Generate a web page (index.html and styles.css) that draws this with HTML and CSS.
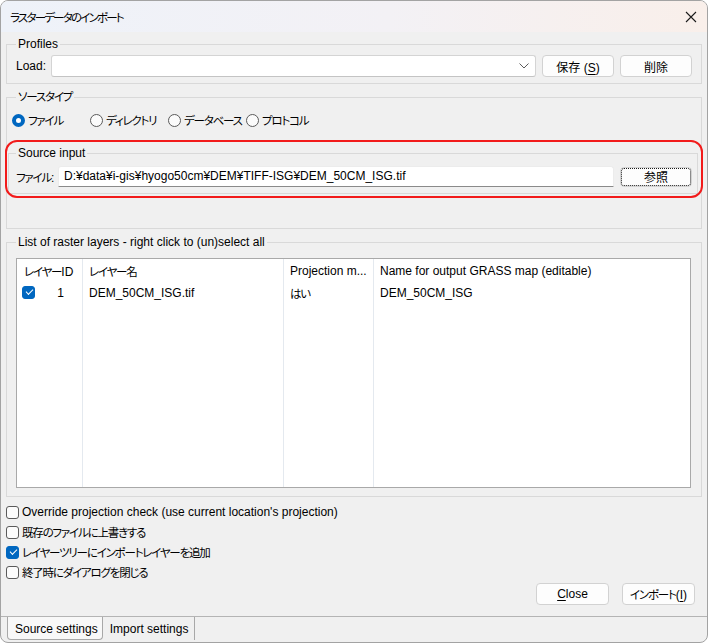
FILE: index.html
```html
<!doctype html>
<html lang="ja">
  <head>
    <meta charset="UTF-8" />
    <title>ラスターデータのインポート</title>
    <link rel="stylesheet" href="styles.css">
  </head>
  <body>
    <div class="window">
      <div class="titlebar">
        <span class="title">ラスターデータのインポート</span>
        <svg class="close-icon" width="12" height="12" viewBox="0 0 12 12">
          <path d="M1 1 L11 11 M11 1 L1 11" stroke="#1b1b1b" stroke-width="1.1" fill="none"/>
        </svg>
      </div>

      <div class="dialog">
        <fieldset class="group profiles">
          <legend>Profiles</legend>
          <div class="field-row">
            <label class="field-label load-label">Load:</label>
            <div class="combo">
              <svg width="10" height="6" viewBox="0 0 10 6">
                <path d="M0.5 0.5 L5 5 L9.5 0.5" stroke="#5c5c5c" stroke-width="1" fill="none"/>
              </svg>
            </div>
            <button class="btn">保存 (<u>S</u>)</button>
            <button class="btn">削除</button>
          </div>
        </fieldset>

        <fieldset class="group source-type">
          <legend class="ja">ソースタイプ</legend>
          <div class="radios">
            <span class="radio-item"><span class="radio checked"></span><span class="ja">ファイル</span></span>
            <span class="radio-item"><span class="radio"></span><span class="ja">ディレクトリ</span></span>
            <span class="radio-item"><span class="radio"></span><span class="ja">データベース</span></span>
            <span class="radio-item"><span class="radio"></span><span class="ja">プロトコル</span></span>
          </div>
          <div class="highlight">
            <fieldset class="group source-input">
              <legend>Source input</legend>
              <div class="field-row">
                <label class="field-label file-label"><span class="ja">ファイル</span>:</label>
                <div class="text-input">D:¥data¥i-gis¥hyogo50cm¥DEM¥TIFF-ISG¥DEM_50CM_ISG.tif</div>
                <button class="btn btn-short focused">参照</button>
              </div>
            </fieldset>
            <div class="annotation"></div>
          </div>
        </fieldset>

        <fieldset class="group layers">
          <legend>List of raster layers - right click to (un)select all</legend>
          <div class="list">
            <table class="layer-table">
              <thead>
                <tr>
                  <th class="col-id"><span class="ja">レイヤー</span>ID</th>
                  <th class="col-name"><span class="ja">レイヤー名</span></th>
                  <th class="col-proj">Projection m...</th>
                  <th class="col-out">Name for output GRASS map (editable)</th>
                </tr>
              </thead>
              <tbody>
                <tr class="data-row">
                  <td class="col-id"><span class="check checked"></span><span class="layer-id">1</span></td>
                  <td>DEM_50CM_ISG.tif</td>
                  <td><span class="ja">はい</span></td>
                  <td>DEM_50CM_ISG</td>
                </tr>
                <tr class="filler-row">
                  <td></td><td></td><td></td><td></td>
                </tr>
              </tbody>
            </table>
          </div>
        </fieldset>

        <div class="options">
          <div class="option"><span class="check"></span>Override projection check (use current location's projection)</div>
          <div class="option"><span class="check"></span><span class="ja">既存のファイルに上書きする</span></div>
          <div class="option"><span class="check checked"></span><span class="ja">レイヤーツリーにインポートレイヤーを追加</span></div>
          <div class="option"><span class="check"></span><span class="ja">終了時にダイアログを閉じる</span></div>
        </div>

        <div class="actions">
          <button class="btn btn-wide"><u>C</u>lose</button>
          <button class="btn btn-wide"><span class="ja">インポート</span>(<u>I</u>)</button>
        </div>
      </div>

      <div class="tabs">
        <span class="tab active">Source settings</span>
        <span class="tab">Import settings</span>
      </div>
    </div>
  </body>
</html>
```

FILE: styles.css
```css
body {
  margin: 0;
  background: #ffffff;
  color: #000;
  font-size: 12px;
  font-family: 'Liberation Sans', 'Noto Sans CJK JP', sans-serif;
  font-feature-settings: 'palt';
}

/* kana in the UI font run narrower than Noto's */
.ja {
  font-size: 11.5px;
  letter-spacing: -1.2px;
}

.window {
  display: flex;
  flex-direction: column;
  box-sizing: border-box;
  border: 1px solid #a3a3a3;
  border-radius: 8px;
  background: #f0f0f0;
  width: 708px;
  height: 643px;
  overflow: hidden;
}

.titlebar {
  display: flex;
  flex: none;
  justify-content: space-between;
  align-items: center;
  background: linear-gradient(90deg, #eef2f9 0%, #f3f1f5 55%, #f9efea 100%);
  padding: 0 9px 0 9px;
  height: 31px;
}

.title {
  font-size: 11.5px;
  letter-spacing: -1.8px;
}

.close-icon {
  margin-right: 1px;
}

.dialog {
  display: flex;
  flex: 1;
  flex-direction: column;
  padding: 4px 5px 11px 5px;
  min-height: 0;
}

/* group boxes */

.group {
  margin: 0;
  border: 1px solid #d9d9d9;
  padding: 3px 9px 6px 9px;
  min-width: 0;
}

.group legend {
  padding: 0 2px;
  line-height: 16px;
}

.field-row {
  display: flex;
  align-items: center;
  gap: 6px;
}

.field-label {
  flex: none;
  white-space: nowrap;
}

.load-label {
  width: 29px;
}

.file-label {
  width: 36px;
}

.combo {
  display: flex;
  flex: 1;
  justify-content: flex-end;
  align-items: center;
  box-sizing: border-box;
  border: 1px solid #d4d4d4;
  border-bottom-color: #c4c4c4;
  border-radius: 3px;
  background: #fff;
  padding-right: 6px;
  height: 22px;
}

.btn {
  flex: none;
  box-sizing: border-box;
  border: 1px solid #d2d2d2;
  border-radius: 4px;
  background: #fdfdfd;
  padding: 0;
  width: 72px;
  height: 22px;
  color: #000;
  font-size: 12px;
  font-family: inherit;
  font-feature-settings: 'palt';
  white-space: nowrap;
}

.btn u {
  text-underline-offset: 2px;
}

.btn-short {
  height: 20px;
}

.btn-wide {
  width: 73px;
}

.focused {
  outline: 1px dotted #1a1a1a;
  outline-offset: -2px;
}

/* source type */

.source-type {
  margin-top: 5px;
  padding: 7px 0 34px 0;
}

.source-type > legend {
  margin-left: 9px;
}

.radios {
  display: flex;
  padding-left: 5px;
  height: 16px;
}

.radio-item {
  display: flex;
  align-items: center;
  gap: 3px;
  width: 78px;
  white-space: nowrap;
}

.radio {
  flex: none;
  box-sizing: border-box;
  border: 1px solid #5a5a5a;
  border-radius: 50%;
  background: #fbfbfb;
  width: 13px;
  height: 13px;
}

.radio.checked {
  border: 4px solid #0067c0;
  background: #fff;
}

.highlight {
  position: relative;
  margin: 17px 3px 0 1px;
}

.source-input {
  padding: 5px 5px 6px 7px;
}

.text-input {
  flex: 1;
  box-sizing: border-box;
  border: 1px solid #ececec;
  border-bottom: 1px solid #8a8a8a;
  border-radius: 3px 3px 0 0;
  background: #fff;
  padding: 0 5px;
  height: 21px;
  line-height: 19px;
  white-space: nowrap;
  overflow: hidden;
}

.annotation {
  position: absolute;
  top: -5px;
  right: -5px;
  bottom: -4px;
  left: -3px;
  border: 2px solid #f21b1b;
  border-radius: 12px;
  pointer-events: none;
}

/* layer list */

.layers {
  margin-top: 5px;
  padding: 8px 10px 8px 9px;
}

.list {
  box-sizing: border-box;
  border: 1px solid #a9a9a9;
  background: #fff;
  height: 230px;
}

.layer-table {
  border-collapse: collapse;
  width: 100%;
  height: 100%;
}

.layer-table th,
.layer-table td {
  border-right: 1px solid #e4e9ef;
  padding: 0 0 0 6px;
  font-weight: normal;
  text-align: left;
  white-space: nowrap;
}

.layer-table th:last-child,
.layer-table td:last-child {
  border-right: none;
}

.layer-table thead tr {
  height: 23px;
}

.data-row {
  height: 22px;
}

.layer-table th.col-id {
  padding-left: 7px;
  width: 58px;
}

.layer-table td.col-id {
  padding-left: 5px;
}

.layer-table .col-name {
  width: 194px;
}

.layer-table .col-proj {
  width: 83px;
}

.layer-id {
  display: inline-block;
  width: 29px;
  text-align: right;
}

.data-row .check {
  vertical-align: -2px;
}

/* options */

.options {
  margin-top: 5px;
}

.option {
  display: flex;
  align-items: center;
  gap: 3px;
  height: 20px;
  white-space: nowrap;
}

.check {
  display: inline-block;
  flex: none;
  box-sizing: border-box;
  border: 1px solid #5a5a5a;
  border-radius: 3px;
  background: #fbfbfb;
  width: 13px;
  height: 13px;
}

.check.checked {
  position: relative;
  border-color: #0067c0;
  background: #0067c0;
}

.check.checked::after {
  position: absolute;
  top: 2px;
  left: 3px;
  transform: rotate(-45deg);
  border-bottom: 1px solid #fff;
  border-left: 1px solid #fff;
  width: 6px;
  height: 3px;
  content: '';
}

.actions {
  display: flex;
  justify-content: flex-end;
  gap: 13px;
  margin-top: auto;
  padding-right: 7px;
}

/* bottom tabs */

.tabs {
  display: flex;
  flex: none;
  border-top: 1px solid #b4b4b4;
  padding-left: 6px;
  height: 25px;
}

.tab {
  box-sizing: border-box;
  border-right: 1px solid #a8a8a8;
  padding: 5px 6px 0 7px;
  height: 23px;
  font-size: 12px;
}

.tab.active {
  border: 1px solid #a8a8a8;
  border-top: none;
  border-radius: 0 0 4px 4px;
  background: #f8f8f8;
  padding: 5px 4px 0 7px;
}
```
